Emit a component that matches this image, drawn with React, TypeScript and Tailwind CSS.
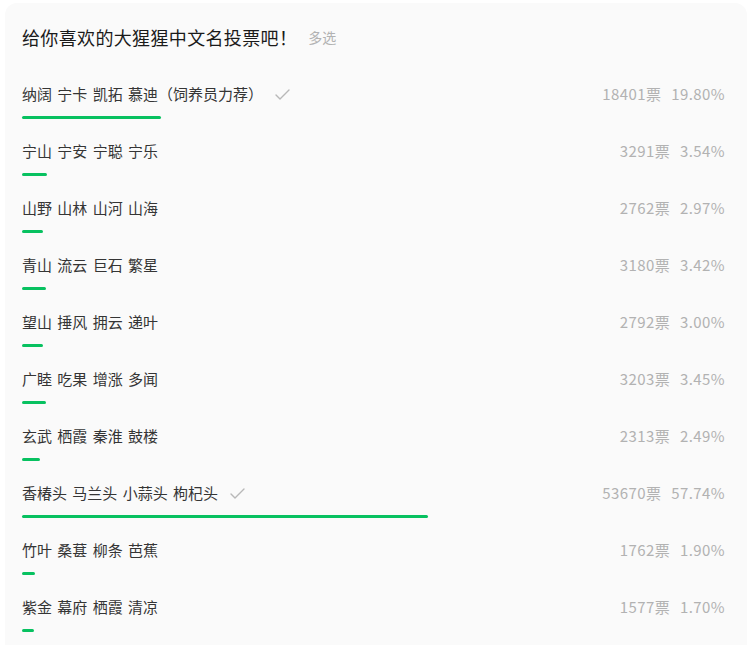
import React from "react";

const options = [
  { name: "纳阔 宁卡 凯拓 慕迪（饲养员力荐）", votes: 18401, pct: 19.8, checked: true },
  { name: "宁山 宁安 宁聪 宁乐", votes: 3291, pct: 3.54 },
  { name: "山野 山林 山河 山海", votes: 2762, pct: 2.97 },
  { name: "青山 流云 巨石 繁星", votes: 3180, pct: 3.42 },
  { name: "望山 捶风 拥云 递叶", votes: 2792, pct: 3.0 },
  { name: "广睦 吃果 增涨 多闻", votes: 3203, pct: 3.45 },
  { name: "玄武 栖霞 秦淮 鼓楼", votes: 2313, pct: 2.49 },
  { name: "香椿头 马兰头 小蒜头 枸杞头", votes: 53670, pct: 57.74, checked: true },
  { name: "竹叶 桑葚 柳条 芭蕉", votes: 1762, pct: 1.9 },
  { name: "紫金 幕府 栖霞 清凉", votes: 1577, pct: 1.7 },
];

const Check = () => (
  <svg width="15" height="11" viewBox="0 0 15 11" fill="none" className="ml-[12px]">
    <polyline points="1,6 5,10 14,1" stroke="#b8b8b8" strokeWidth="1.4" strokeLinecap="round" strokeLinejoin="round" />
  </svg>
);

const App = () => {
  return (
    <div className="min-h-screen bg-white pt-[3px] pl-[5px] pr-[3px] font-['Noto_Sans_CJK_SC',sans-serif]">
      <div className="bg-[#fafafa] rounded-t-[12px] pl-[17px] pr-[22px] pt-[22px] pb-[20px]">
        <div className="flex items-center h-6">
          <span className="text-[18px] tracking-[0.35px] text-[#1a1a1a]">给你喜欢的大猩猩中文名投票吧！</span>
          <span className="ml-[11px] text-[14px] text-[#b2b2b2]">多选</span>
        </div>

        <div className="mt-[35px] flex flex-col">
          {options.map((o) => (
            <div key={o.name} className="h-[57px]">
              <div className="flex items-center h-5">
                <span className="text-[15px] text-[#353535] whitespace-nowrap [word-spacing:2px]">{o.name}</span>
                {o.checked && <Check />}
                <span className="ml-auto text-[15px] tracking-[0.4px] text-[#b2b2b2] whitespace-nowrap">
                  {o.votes}票<span className="ml-[10px]">{o.pct.toFixed(2)}%</span>
                </span>
              </div>
              <div className="mt-[12px] h-[3px]">
                <div className="h-[3px] rounded-full bg-[#07c160]" style={{ width: `${o.pct}%` }} />
              </div>
            </div>
          ))}
        </div>
      </div>
    </div>
  );
};

export default App;
